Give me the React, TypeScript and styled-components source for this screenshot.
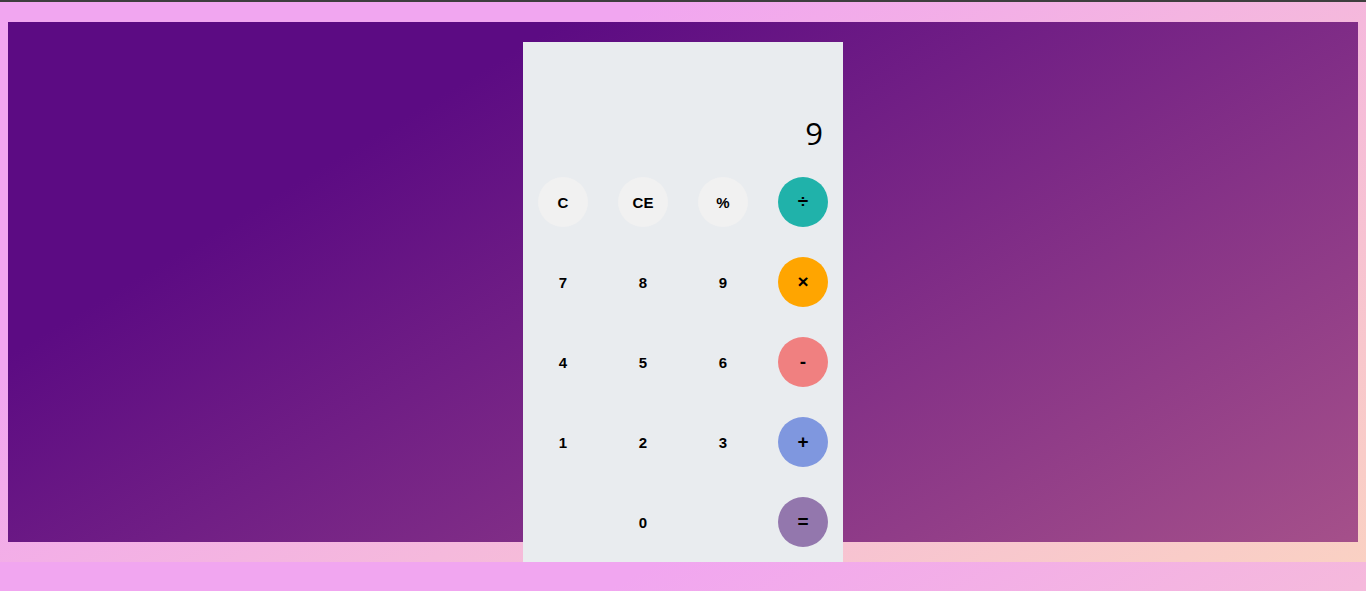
import { createGlobalStyle, styled } from "styled-components";

const GlobalStyle = createGlobalStyle`
  html {
    /* The page tile is 562px tall and repeats below the content. */
    background: linear-gradient(150deg, #f1a6f0 28%, #fad1c3 100%) 0 0 / 100% 562px repeat;
  }

  body {
    margin: 0;
    font-family: "Liberation Sans", Arial, sans-serif;
  }
`;

type Kind = "fn" | "num" | "div" | "mul" | "sub" | "add" | "eq" | "blank";

const keyColors: Record<Kind, string> = {
  fn: "#f1f1f1",
  num: "transparent",
  div: "#20b2aa",
  mul: "#ffa500",
  sub: "#f08080",
  add: "#7f97df",
  eq: "#9377ad",
  blank: "transparent",
};

const keys: { label: string; kind: Kind }[] = [
  { label: "C", kind: "fn" },
  { label: "CE", kind: "fn" },
  { label: "%", kind: "fn" },
  { label: "÷", kind: "div" },
  { label: "7", kind: "num" },
  { label: "8", kind: "num" },
  { label: "9", kind: "num" },
  { label: "×", kind: "mul" },
  { label: "4", kind: "num" },
  { label: "5", kind: "num" },
  { label: "6", kind: "num" },
  { label: "-", kind: "sub" },
  { label: "1", kind: "num" },
  { label: "2", kind: "num" },
  { label: "3", kind: "num" },
  { label: "+", kind: "add" },
  { label: "", kind: "blank" },
  { label: "0", kind: "num" },
  { label: "", kind: "blank" },
  { label: "=", kind: "eq" },
];

const isOperator = (kind: Kind) =>
  kind === "div" || kind === "mul" || kind === "sub" || kind === "add" || kind === "eq";

export default function App() {
  return (
    <>
      <GlobalStyle />
      <TopLine />
      <Page>
        <Stage>
          <Calculator>
            <Display>9</Display>
            <Keypad>
              {keys.map((key, i) => (
                <KeyCell key={i}>
                  {key.kind !== "blank" && (
                    <Key type="button" $kind={key.kind}>
                      {key.label}
                    </Key>
                  )}
                </KeyCell>
              ))}
            </Keypad>
          </Calculator>
        </Stage>
      </Page>
    </>
  );
}

const TopLine = styled.div`
  height: 2px;
  background: #3e3e3e;
`;

const Page = styled.div`
  padding: 20px 8px 20px;
`;

const Stage = styled.main`
  height: 520px;
  background: linear-gradient(149deg, #5c0b83 25%, #a5508a 100%);
  display: flex;
  justify-content: center;
  align-items: flex-start;
`;

const Calculator = styled.section`
  margin-top: 20px;
  width: 320px;
  height: 520px;
  flex-shrink: 0;
  background: #e9ecef;
  display: flex;
  flex-flow: column;
`;

const Display = styled.div`
  height: 120px;
  box-sizing: border-box;
  padding: 0 20px 10px;
  display: flex;
  align-items: flex-end;
  justify-content: flex-end;
  font: 400 31px/1.2 "Open Sans", "DejaVu Sans", sans-serif;
  color: #000;
`;

const Keypad = styled.div`
  display: grid;
  grid-template-columns: repeat(4, 80px);
  grid-auto-rows: 80px;
`;

const KeyCell = styled.div`
  display: flex;
  align-items: center;
  justify-content: center;
`;

const Key = styled.button<{ $kind: Kind }>`
  width: 50px;
  height: 50px;
  border: none;
  border-radius: 50%;
  padding: 0;
  background: ${(p) => keyColors[p.$kind]};
  color: #000;
  font: bold ${(p) => (isOperator(p.$kind) ? "19px" : "15px")} "Liberation Sans", Arial, sans-serif;
  cursor: pointer;
  display: flex;
  align-items: center;
  justify-content: center;
`;
